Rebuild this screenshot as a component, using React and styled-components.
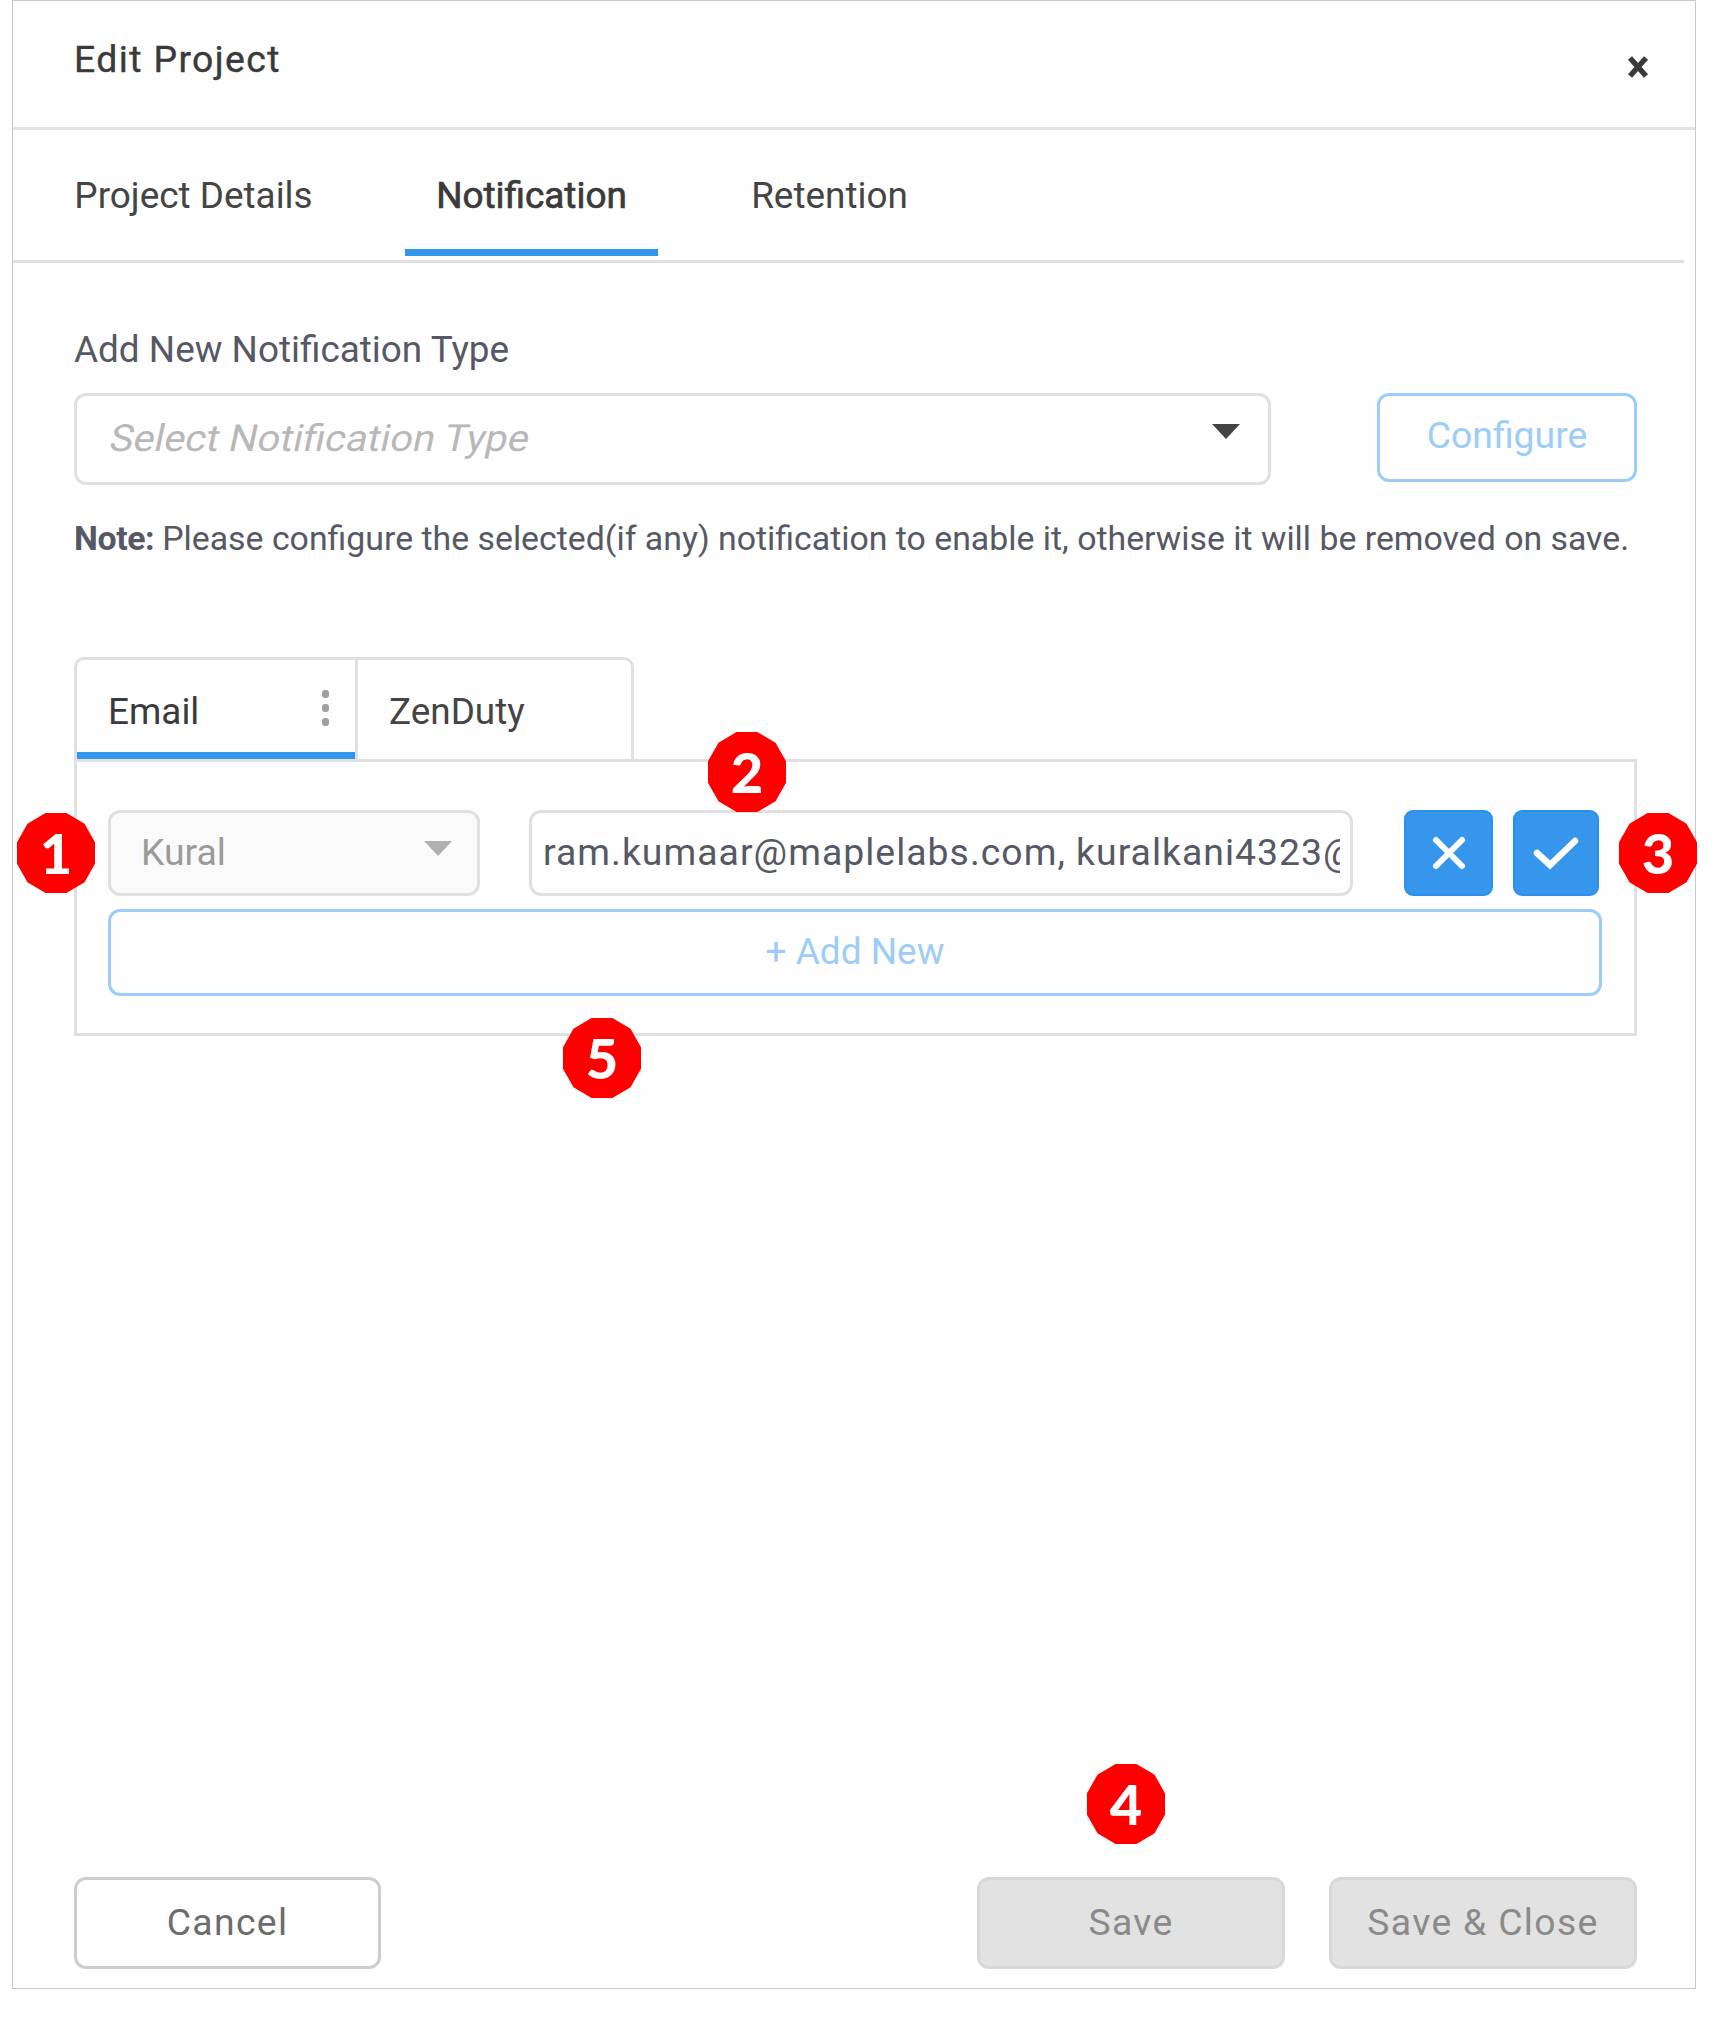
import React from "react";
import styled, { createGlobalStyle } from "styled-components";

const Global = createGlobalStyle`
  * { box-sizing: border-box; }
  body { margin: 0; background: #fff; font-family: Roboto, "Liberation Sans", sans-serif; }
  button { font-family: inherit; margin: 0; }
`;

const Page = styled.div`
  position: relative;
  width: 1713px;
  height: 2041px;
  padding-left: 12px;
  overflow: hidden;
`;

const Dialog = styled.section`
  display: flex;
  flex-direction: column;
  width: 1684px;
  height: 1989px;
  border: 1px solid #c9c9c9;
  background: #fefefe;
`;

const Text = styled.span`
  display: block;
  flex: none;
  white-space: nowrap;
  font-size: ${(p) => p.$size || 37.33}px;
  line-height: 44px;
  font-weight: ${(p) => p.$weight || 400};
  letter-spacing: ${(p) => p.$track || 0}px;
  color: ${(p) => p.$color || "#444"};
  -webkit-text-stroke: ${(p) => p.$stroke || 0}px currentColor;
`;

const Placeholder = styled(Text)`
  transform: skewX(-12deg) scaleX(1.067);
  transform-origin: 0 80%;
`;

const Header = styled.header`
  display: flex;
  justify-content: space-between;
  height: 129px;
  padding: 36px 46px 0 61px;
  border-bottom: 3px solid #e2e2e2;
`;

const CloseButton = styled.button`
  width: 22px;
  height: 24px;
  margin-top: 18px;
  padding: 0;
  border: 0;
  background: none;
  svg { display: block; }
`;

const TabBar = styled.nav`
  display: flex;
  gap: 61px;
  width: 1671px;
  height: 133px;
  padding-left: 30px;
  border-bottom: 3px solid #e0e0e0;
`;

const Tab = styled.div`
  height: 126px;
  width: ${(p) => p.$width}px;
  padding: 44px 0 0;
  display: flex;
  justify-content: center;
  border-bottom: 7px solid ${(p) => (p.$active ? "#3196ee" : "transparent")};
`;

const Body = styled.main`
  flex: 1;
  padding: 65px 58px 0 61px;
`;

const Row = styled.div`
  display: flex;
  justify-content: space-between;
  align-items: flex-start;
  margin-top: 21px;
`;

const Select = styled.div`
  display: flex;
  flex: none;
  justify-content: space-between;
  width: ${(p) => p.$width}px;
  height: ${(p) => p.$height}px;
  padding: ${(p) => p.$pad};
  border: 3px solid #e0e0e0;
  border-radius: 12px;
  background: ${(p) => (p.$disabled ? "#fafafa" : "#fefefe")};
`;

const Caret = styled.i`
  margin-top: ${(p) => p.$top}px;
  width: 28px;
  height: 15px;
  background: ${(p) => p.$color};
  clip-path: polygon(0 0, 100% 0, 50% 100%);
`;

const OutlineButton = styled.button`
  display: flex;
  justify-content: center;
  width: ${(p) => p.$width}px;
  height: ${(p) => p.$height}px;
  padding: ${(p) => p.$top}px 0 0;
  border: 3px solid ${(p) => p.$border || "#9dccf8"};
  border-radius: 12px;
  background: ${(p) => p.$fill || "#fefefe"};
`;

const Note = styled.p`
  display: flex;
  gap: 8px;
  margin: 32px 0 0;
`;

const ChannelTabs = styled.div`
  display: flex;
  width: 560px;
  height: 102px;
  margin-top: 96px;
  border: 3px solid #e0e0e0;
  border-bottom: 0;
  border-radius: 10px 10px 0 0;
`;

const ChannelTab = styled.div`
  display: flex;
  flex: none;
  justify-content: space-between;
  width: ${(p) => (p.$active ? 281 : 273)}px;
  padding: 30px 26px 0 31px;
  border-right: ${(p) => (p.$active ? "3px solid #e0e0e0" : "0")};
  box-shadow: ${(p) => (p.$active ? "inset 0 -7px #3196ee" : "none")};
`;

const Dots = styled.span`
  display: flex;
  flex-direction: column;
  gap: 6px;
  i { width: 7px; height: 8px; border-radius: 3px; background: #a0a0a0; }
`;

const ChannelPanel = styled.div`
  height: 277px;
  padding: 48px 31px 0;
  border: 3px solid #e0e0e0;
`;

const Entry = styled.div`
  display: flex;
  align-items: flex-start;
  margin-bottom: 13px;
`;

const AddressField = styled.div`
  flex: none;
  width: 824px;
  height: 86px;
  margin: 0 51px 0 49px;
  padding: 17px 10px 0 11px;
  border: 3px solid #e0e0e0;
  border-radius: 12px;
`;

const AddressClip = styled.div`
  overflow: hidden;
`;

const IconButton = styled.button`
  flex: none;
  width: ${(p) => p.$width}px;
  height: 86px;
  margin-right: 20px;
  padding: 0;
  border: 2px solid #2a90ec;
  border-radius: 9px;
  background: #3596ec;
  svg { display: block; margin: 0 auto; }
`;

const Footer = styled.footer`
  display: flex;
  padding: 0 58px 19px 61px;
  gap: 44px;
  > :first-child { margin-right: auto; }
`;

const Badge = styled.span`
  position: absolute;
  left: ${(p) => p.$x}px;
  top: ${(p) => p.$y}px;
  width: 78px;
  height: 80px;
  clip-path: polygon(36.6% 0, 63.4% 0, 86.6% 13.4%, 100% 36.6%, 100% 63.4%, 86.6% 86.6%, 63.4% 100%, 36.6% 100%, 13.4% 86.6%, 0 63.4%, 0 36.6%, 13.4% 13.4%);
  background: #fe0000;
  color: #fff;
  font: 900 56px/80px Lato, sans-serif;
  text-align: center;
`;

const ink = "#3a3a3a";
const slate = "#565965";
const blue = "#9dccf8";
const NARROW = 36.9;

export default function App() {
  return (
    <Page>
      <Global />
      <Dialog>
        <Header>
          <Text $track={1.4} $stroke={0.4} $color={ink}>Edit Project</Text>
          <CloseButton>
            <svg width="22" height="24" viewBox="0 0 22 24"><path d="M3 3L19 21M19 3L3 21" stroke="#3a3a3a" strokeWidth="5.5" /></svg>
          </CloseButton>
        </Header>
        <TabBar>
          <Tab $width={301}><Text $size={NARROW}>Project Details</Text></Tab>
          <Tab $width={253} $active><Text $size={NARROW} $stroke={0.7} $color={ink}>Notification</Text></Tab>
          <Tab $width={221}><Text $size={NARROW}>Retention</Text></Tab>
        </TabBar>
        <Body>
          <Text $size={NARROW} $color={slate}>Add New Notification Type</Text>
          <Row>
            <Select $width={1197} $height={92} $pad="20px 28px 0 27px">
              <Placeholder $color="#b8b8b8">Select Notification Type</Placeholder>
              <Caret $top={8} $color="#444" />
            </Select>
            <OutlineButton $width={260} $height={89} $top={17}><Text $color={blue}>Configure</Text></OutlineButton>
          </Row>
          <Note>
            <Text $size={33.83} $weight={700} $track={-0.4} $color={slate}>Note:</Text>
            <Text $size={33.83} $color={slate}>Please configure the selected(if any) notification to enable it, otherwise it will be removed on save.</Text>
          </Note>
          <ChannelTabs>
            <ChannelTab $active>
              <Text $size={NARROW} $color={ink}>Email</Text>
              <Dots><i /><i /><i /></Dots>
            </ChannelTab>
            <ChannelTab><Text $size={NARROW}>ZenDuty</Text></ChannelTab>
          </ChannelTabs>
          <ChannelPanel>
            <Entry>
              <Select $width={372} $height={86} $pad="17px 25px 0 30px" $disabled>
                <Text $color="#9a9a9a">Kural</Text>
                <Caret $top={11} $color="#b0b0b0" />
              </Select>
              <AddressField><AddressClip><Text $track={1.03} $color={slate}>ram.kumaar@maplelabs.com, kuralkani4323@</Text></AddressClip></AddressField>
              <IconButton $width={89}>
                <svg width="36" height="36" viewBox="0 0 36 36"><path d="M5 5L31 31M31 5L5 31" stroke="#fff" strokeWidth="6" strokeLinecap="round" /></svg>
              </IconButton>
              <IconButton $width={86}>
                <svg width="48" height="36" viewBox="0 0 48 36"><path d="M5 18L18 30L43 6" fill="none" stroke="#fff" strokeWidth="6.5" strokeLinecap="round" /></svg>
              </IconButton>
            </Entry>
            <OutlineButton $width={1494} $height={87} $top={18}><Text $size={37} $color={blue}>+ Add New</Text></OutlineButton>
          </ChannelPanel>
        </Body>
        <Footer>
          <OutlineButton $width={307} $height={92} $top={20} $border="#cdcdcd"><Text $track={1.33} $color="#6c6c6c">Cancel</Text></OutlineButton>
          <OutlineButton $width={308} $height={92} $top={20} $border="#d8d8d8" $fill="#e2e2e2"><Text $track={1.33} $color="#8a8a8a">Save</Text></OutlineButton>
          <OutlineButton $width={308} $height={92} $top={20} $border="#d8d8d8" $fill="#e2e2e2"><Text $track={1.33} $color="#8a8a8a">Save &amp; Close</Text></OutlineButton>
        </Footer>
      </Dialog>
      <Badge $x={17} $y={813}>1</Badge>
      <Badge $x={708} $y={732}>2</Badge>
      <Badge $x={1619} $y={813}>3</Badge>
      <Badge $x={1087} $y={1764}>4</Badge>
      <Badge $x={563} $y={1018}>5</Badge>
    </Page>
  );
}
